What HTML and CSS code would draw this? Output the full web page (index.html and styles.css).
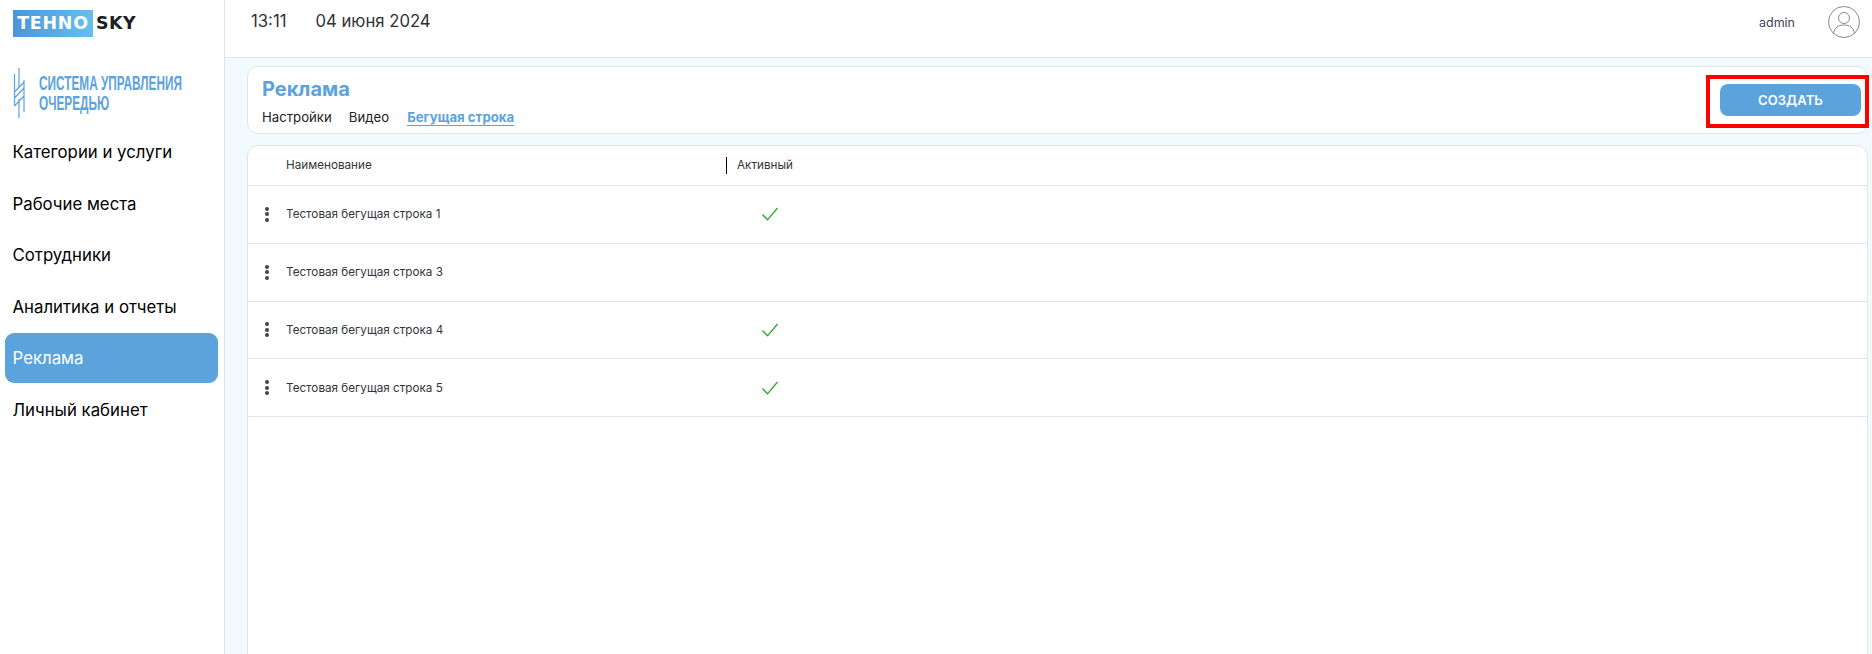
FILE: index.html
```html
<!DOCTYPE html>
<html lang="ru">
<head>
<meta charset="utf-8">
<title>Реклама</title>
<link rel="stylesheet" href="styles.css">
</head>
<body>
<div class="app">
  <aside class="sidebar">
    <div class="brand"><span class="brand-a">TEHNO</span><span class="brand-b">SKY</span></div>
    <div class="system">
      <svg class="system-icon" viewBox="0 0 12 50" width="12" height="50" fill="none" stroke="#5ba3dc" stroke-width="1.200">
        <path d="M1.500 6V38M6 0V20M6 31V50M11 12V44M1.500 24L11 14M1.500 30L11 20M1.500 38L11 28"/>
      </svg>
      <div class="system-text">СИСТЕМА УПРАВЛЕНИЯ<br>ОЧЕРЕДЬЮ</div>
    </div>
    <nav class="nav">
      <a class="nav-item">Категории и услуги</a>
      <a class="nav-item">Рабочие места</a>
      <a class="nav-item">Сотрудники</a>
      <a class="nav-item">Аналитика и отчеты</a>
      <a class="nav-item active">Реклама</a>
      <a class="nav-item">Личный кабинет</a>
    </nav>
  </aside>
  <div class="main">
    <header class="topbar">
      <span class="time">13:11</span>
      <span class="date">04 июня 2024</span>
      <span class="user">admin</span>
      <svg class="avatar" viewBox="0 0 32 32" width="32" height="32" fill="none" stroke="#8a8a8a" stroke-width="1">
        <circle cx="16" cy="16" r="15.500"/>
        <circle cx="16" cy="12" r="5.500"/>
        <path d="M5.500 27.500C6.500 22 10 19 16 19C22 19 25.500 22 26.500 27.500"/>
      </svg>
    </header>
    <div class="content">
      <section class="page-head">
        <div>
          <h1 class="title">Реклама</h1>
          <div class="tabs">
            <a class="tab">Настройки</a>
            <a class="tab">Видео</a>
            <a class="tab current">Бегущая строка</a>
          </div>
        </div>
        <div class="create-wrap">
          <button class="create">СОЗДАТЬ</button>
          <span class="highlight"></span>
        </div>
      </section>
      <section class="table">
        <div class="row head">
          <div class="cell-menu"></div>
          <div class="cell-name">Наименование</div>
          <div class="cell-active"><span class="sep"></span>Активный</div>
        </div>
        <div class="row">
          <div class="cell-menu"><span class="dots"><i></i><i></i><i></i></span></div>
          <div class="cell-name">Тестовая бегущая строка 1</div>
          <div class="cell-active"><svg class="check" viewBox="0 0 16 14" width="16" height="14" fill="none" stroke="#22a82a" stroke-width="1.300"><path d="M0.500 7.500L5.500 12.800L15.500 1"/></svg></div>
        </div>
        <div class="row">
          <div class="cell-menu"><span class="dots"><i></i><i></i><i></i></span></div>
          <div class="cell-name">Тестовая бегущая строка 3</div>
          <div class="cell-active"></div>
        </div>
        <div class="row">
          <div class="cell-menu"><span class="dots"><i></i><i></i><i></i></span></div>
          <div class="cell-name">Тестовая бегущая строка 4</div>
          <div class="cell-active"><svg class="check" viewBox="0 0 16 14" width="16" height="14" fill="none" stroke="#22a82a" stroke-width="1.300"><path d="M0.500 7.500L5.500 12.800L15.500 1"/></svg></div>
        </div>
        <div class="row">
          <div class="cell-menu"><span class="dots"><i></i><i></i><i></i></span></div>
          <div class="cell-name">Тестовая бегущая строка 5</div>
          <div class="cell-active"><svg class="check" viewBox="0 0 16 14" width="16" height="14" fill="none" stroke="#22a82a" stroke-width="1.300"><path d="M0.500 7.500L5.500 12.800L15.500 1"/></svg></div>
        </div>
      </section>
    </div>
  </div>
</div>
</body>
</html>
```
FILE: styles.css
```css
* { box-sizing: border-box; }
html, body { margin: 0; padding: 0; height: 100%; overflow: hidden; }
body { font-family: Inter, "Noto Sans", sans-serif; color: #000; background: #fff; }
.app { display: flex; height: 654px; }
.sidebar { width: 225px; flex: none; border-right: 1px solid #dfe5ea; padding: 10px 6px 0 5px; background: #fff; }
.brand { display: flex; align-items: stretch; height: 27px; margin-left: 8px; font-family: "DejaVu Sans", sans-serif; font-weight: 700; font-size: 17.400px; line-height: 27px; }
.brand-a { width: 80px; text-align: center; color: #fff; letter-spacing: 0.800px; background: linear-gradient(90deg, #4f94d8, #62c0ee); }
.brand-b { margin-left: 3px; color: #1e1e22; letter-spacing: 0.500px; }
.system { display: flex; margin: 31px 0 0 8px; height: 59px; }
.system-icon { flex: none; }
.system-text { margin: 5px 0 0 13.500px; color: #5ba3dc; font-family: "Liberation Sans", sans-serif; font-weight: 700; font-size: 20px; line-height: 20px; white-space: nowrap; transform: scaleX(0.590); transform-origin: left top; }
.nav { display: flex; flex-direction: column; gap: 1.600px; }
.nav-item { display: flex; align-items: center; height: 50px; padding-left: 7.500px; border-radius: 9px; font-size: 16.800px; }
.nav-item.active { color: #fff; background: #5ba3dc; }
.main { flex: 1; min-width: 0; display: flex; flex-direction: column; }
.topbar { display: flex; align-items: flex-start; height: 58px; flex: none; padding: 11px 0 0 26px; border-bottom: 1px solid #dfe5ea; background: #fff; font-size: 16.700px; line-height: 20px; color: #303036; }
.date { margin-left: 29px; }
.user { margin-left: auto; margin-right: 33px; margin-top: 2px; font-size: 12.500px; color: #3e4650; }
.avatar { margin: -5px 12px 0 0; }
.content { flex: 1; min-height: 0; padding: 8px 4px 0 22px; background: #f3fafe; }
.page-head { display: flex; justify-content: space-between; height: 68px; padding: 9px 6px 0 14px; border: 1px solid #dfe5ea; border-radius: 11px; background: #fff; }
.title { margin: 0; color: #5ba3dc; font-size: 20px; font-weight: 700; line-height: 27px; }
.tabs { display: flex; gap: 17px; margin-top: 6px; font-size: 13.200px; line-height: 16px; color: #222; }
.tab { display: block; height: 17px; }
.tab.current { color: #5ba3dc; font-weight: 700; margin-left: 1px; border-bottom: 1px solid #5ba3dc; }
.create-wrap { position: relative; margin-top: 8px; }
.create { display: block; width: 141px; height: 32px; border: 0; border-radius: 8px; background: #5ba3dc; color: #fff; font-family: inherit; font-weight: 600; font-size: 13px; letter-spacing: 0.100px; }
.highlight { position: absolute; left: -14px; top: -9px; width: 163px; height: 53px; border: 4px solid #f00; }
.table { height: 520px; margin-top: 11px; border: 1px solid #dfe5ea; border-radius: 11px 11px 0 0; background: #fff; }
.row { display: flex; align-items: center; height: 57.800px; border-bottom: 1px solid #dfe5ea; font-size: 11.700px; color: #33353b; }
.row.head { height: 40px; padding-bottom: 2px; }
.cell-menu { width: 38px; flex: none; display: flex; justify-content: center; }
.cell-name { width: 440px; flex: none; }
.cell-active { position: relative; padding-left: 11px; }
.sep { position: absolute; left: 0; top: -1px; width: 1px; height: 17px; background: #000; }
.check { display: block; margin: 0 0 0 25px; }
.dots { display: flex; flex-direction: column; gap: 1.500px; }
.dots i { display: block; width: 4px; height: 4px; border-radius: 50%; background: #444; }
```
